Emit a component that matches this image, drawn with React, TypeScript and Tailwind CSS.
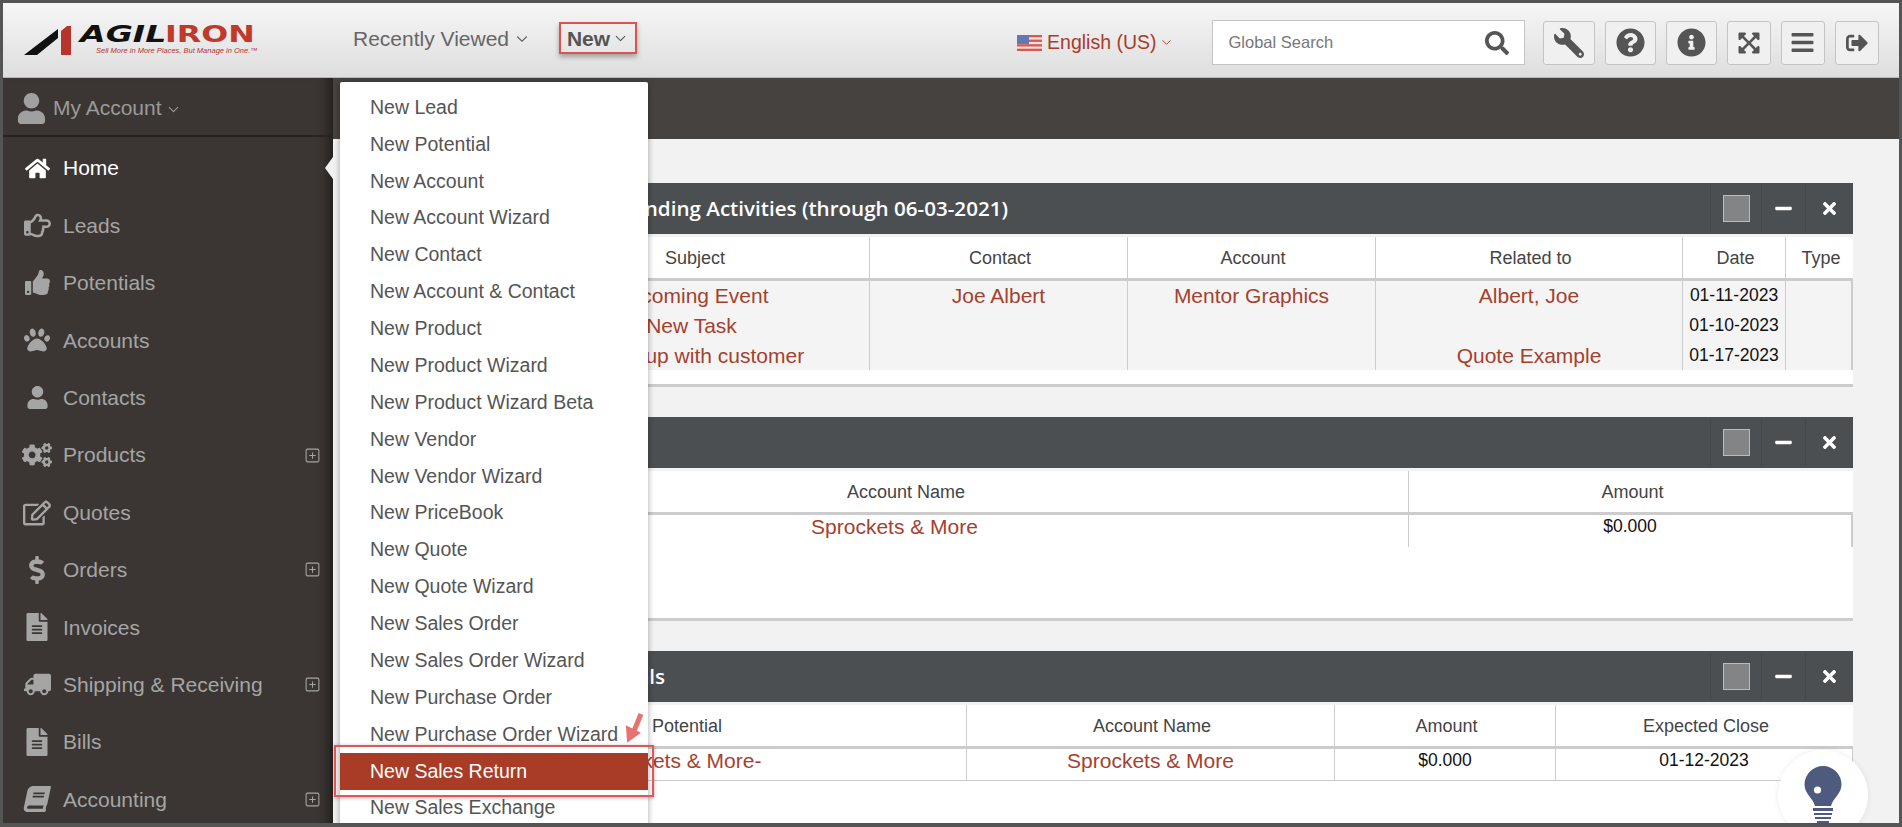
import type { ReactNode } from "react";
import { ChevronDown, SquarePlus } from "lucide-react";
import {
  FaBars,
  FaBook,
  FaCogs,
  FaDollarSign,
  FaExpandArrowsAlt,
  FaFileAlt,
  FaHome,
  FaInfoCircle,
  FaMinus,
  FaPaw,
  FaQuestionCircle,
  FaRegEdit,
  FaRegHandPointRight,
  FaSearch,
  FaSignOutAlt,
  FaThumbsUp,
  FaTimes,
  FaTruck,
  FaUser,
  FaWrench,
} from "react-icons/fa";

const navItems = [
  { label: "Home", icon: <FaHome size={25} />, active: true },
  { label: "Leads", icon: <FaRegHandPointRight size={27} /> },
  { label: "Potentials", icon: <FaThumbsUp size={25} /> },
  { label: "Accounts", icon: <FaPaw size={26} /> },
  { label: "Contacts", icon: <FaUser size={23} /> },
  { label: "Products", icon: <FaCogs size={30} />, more: true },
  { label: "Quotes", icon: <FaRegEdit size={28} /> },
  { label: "Orders", icon: <FaDollarSign size={28} />, more: true },
  { label: "Invoices", icon: <FaFileAlt size={28} /> },
  { label: "Shipping & Receiving", icon: <FaTruck size={27} className="-scale-x-100" />, more: true },
  { label: "Bills", icon: <FaFileAlt size={28} /> },
  { label: "Accounting", icon: <FaBook size={26} className="-skew-x-12" />, more: true },
];

const newItems = [
  "New Lead",
  "New Potential",
  "New Account",
  "New Account Wizard",
  "New Contact",
  "New Account & Contact",
  "New Product",
  "New Product Wizard",
  "New Product Wizard Beta",
  "New Vendor",
  "New Vendor Wizard",
  "New PriceBook",
  "New Quote",
  "New Quote Wizard",
  "New Sales Order",
  "New Sales Order Wizard",
  "New Purchase Order",
  "New Purchase Order Wizard",
  "New Sales Return",
  "New Sales Exchange",
];

function Logo() {
  return (
    <div className="flex items-start ml-[21px] w-[234px]">
      <svg width="54" height="30" viewBox="0 0 54 30" className="shrink-0 mt-[1px]">
        <polygon points="0,29 34,3 34,12 13,29" fill="#111" />
        <polygon points="37,5 43,0 47,0 47,29 37,29" fill="#b5352c" />
      </svg>
      <div className="ml-[2px] leading-none">
        <div className="flex text-[23px] h-[19px] leading-[19px] font-bold font-['DejaVu_Sans',sans-serif] whitespace-nowrap">
          <span className="italic text-[#111] w-[85px] origin-left scale-x-[1.44]">AGIL</span>
          <span className="text-[#c0392b] origin-left scale-x-[1.38]">IRON</span>
        </div>
        <div className="text-[7.5px] mt-[3px] ml-[16px] italic text-[#b5352c] whitespace-nowrap">
          Sell More in More Places, But Manage in One.™
        </div>
      </div>
    </div>
  );
}

function Flag() {
  return (
    <svg width="25" height="16" viewBox="0 0 25 16" className="shrink-0">
      <rect width="25" height="16" fill="#f1dfdc" />
      <rect y="0" width="25" height="2.3" fill="#d25a52" />
      <rect y="4.6" width="25" height="2.3" fill="#d25a52" />
      <rect y="9.2" width="25" height="2.3" fill="#d25a52" />
      <rect y="13.7" width="25" height="2.3" fill="#d25a52" />
      <rect width="12" height="9" fill="#6478b8" />
    </svg>
  );
}

function ToolButton({ icon, width }: { icon: ReactNode; width: string }) {
  return (
    <button className={`${width} h-[44px] flex items-center justify-center rounded-[3px] border border-[#c4c4c4] bg-[#f0f0f0] text-[#555]`}>
      {icon}
    </button>
  );
}

function Header() {
  return (
    <header className="h-[75px] shrink-0 flex items-center border-b border-[#b8b8b8] bg-gradient-to-b from-[#f6f6f6] to-[#dedede]">
      <Logo />
      <div className="ml-[95px] flex items-center text-[21px] text-[#666] mt-[-2px]">
        Recently Viewed
        <ChevronDown size={18} strokeWidth={1.5} className="ml-[4px]" />
      </div>
      <div className="ml-[28px] w-[78px] h-[32px] flex items-center justify-center pt-[1px] border-2 border-[#d9534f] shadow-[0_3px_5px_rgba(0,0,0,0.3)] text-[21px] font-bold text-[#555] mt-[-4px]">
        New
        <ChevronDown size={17} strokeWidth={1.5} className="ml-[2px]" />
      </div>
      <div className="ml-[380px] flex items-center text-[19.5px] text-[#a83c2a] mt-[5px]">
        <Flag />
        <span className="ml-[5px]">English (US)</span>
        <ChevronDown size={15} strokeWidth={1.5} className="ml-[2px]" />
      </div>
      <div className="ml-[38px] w-[313px] h-[45px] flex items-center justify-between pl-[16px] pr-[15px] bg-white border border-[#c4c4c4] mt-[5px] text-[16.5px] text-[#777]">
        Global Search
        <FaSearch size={24} className="text-[#555]" />
      </div>
      <div className="ml-[18px] flex items-center gap-[10px] mt-[5px]">
        <ToolButton width="w-[52px]" icon={<FaWrench size={30} className="-scale-x-100" />} />
        <ToolButton width="w-[51px]" icon={<FaQuestionCircle size={29} />} />
        <ToolButton width="w-[51px]" icon={<FaInfoCircle size={29} />} />
        <ToolButton width="w-[44px]" icon={<FaExpandArrowsAlt size={24} />} />
        <ToolButton width="w-[44px]" icon={<FaBars size={25} />} />
        <ToolButton width="w-[44px]" icon={<FaSignOutAlt size={22} />} />
      </div>
    </header>
  );
}

function Sidebar() {
  return (
    <aside className="w-[330px] shrink-0 flex flex-col bg-[#3b3633] shadow-[inset_-14px_0_12px_-10px_rgba(0,0,0,0.5)]">
      <div className="h-[59px] shrink-0 flex items-center pl-[13px] pt-[3px] border-b-2 border-[#262321] text-[21px] text-[#9a9a9a]">
        <FaUser size={31} className="text-[#a0a0a0]" />
        <span className="ml-[6px]">My Account</span>
        <ChevronDown size={17} strokeWidth={1.5} className="ml-[3px] mt-[2px]" />
      </div>
      <nav className="pt-[2.5px]">
        {navItems.map((item) => (
          <div
            key={item.label}
            className={`relative h-[57.4px] flex items-center ${item.active ? "text-white" : "text-[#a5a5a5]"}`}
          >
            <span className="w-[60px] flex justify-center pl-[8px] shrink-0">{item.icon}</span>
            <span className="text-[21px] whitespace-nowrap">{item.label}</span>
            {item.more && <SquarePlus size={17} strokeWidth={1.5} className="absolute left-[301px]" />}
            {item.active && (
              <span className="absolute right-0 w-0 h-0 border-y-[11px] border-y-transparent border-r-[8px] border-r-[#f2f2f2]" />
            )}
          </div>
        ))}
      </nav>
    </aside>
  );
}

function Panel({ title, titleWidth, children }: { title?: string; titleWidth?: string; children: ReactNode }) {
  return (
    <section className="h-[204px] shrink-0">
      <div className="h-[51px] flex items-center justify-between bg-[#4c4f52] text-white">
        <h2 className={`${titleWidth} text-right whitespace-nowrap text-[20.6px] font-semibold font-['Open_Sans',sans-serif]`}>{title}</h2>
        <div className="flex h-[47px] items-center text-white">
          <div className="w-[52px] h-full flex items-center justify-center border-x border-[#45484b]">
            <span className="block w-[27px] h-[27px] bg-[#838486] border border-[#bbb]" />
          </div>
          <div className="w-[44px] h-full flex items-center justify-center border-r border-[#45484b]">
            <FaMinus size={19} />
          </div>
          <div className="w-[47px] h-full flex items-center justify-center">
            <FaTimes size={19} />
          </div>
        </div>
      </div>
      <div className="mt-[3px] h-[150px] bg-white border-b-[3px] border-[#ccc]">{children}</div>
    </section>
  );
}

function HeadCell({ children }: { children?: ReactNode }) {
  return (
    <div className="h-[44px] flex items-center justify-center pt-[2px] pl-[3px] border-r border-b-[3px] border-[#ccc] last:border-r-0 text-[18px] text-[#444]">
      {children}
    </div>
  );
}

function BodyCell({ children, className = "" }: { children?: ReactNode; className?: string }) {
  return (
    <div className={`border-r border-[#ccc] text-center text-[21px] text-[#a5412f] whitespace-nowrap overflow-hidden ${className}`}>
      {children}
    </div>
  );
}

function DateLine({ children }: { children: ReactNode }) {
  return <div className="h-[30px] text-[17.5px] leading-[29px] text-[#111]">{children}</div>;
}

function SmallDate({ children }: { children: ReactNode }) {
  return <div className="text-[17.5px] leading-[23px] text-[#111]">{children}</div>;
}

function Main() {
  return (
    <div className="flex-1 min-w-0 flex flex-col">
      <div className="h-[61px] shrink-0 bg-[#45423f]" />
      <main className="flex-1 min-h-0 flex flex-col gap-[30px] pt-[44px] pl-[29px] pr-[46px] bg-[#f2f2f2]">
        <Panel title="Pending Activities (through 06-03-2021)" titleWidth="w-[646px]">
          <div className="grid grid-cols-[156px_352px_258px_248px_307px_103px_67px]">
            <HeadCell />
            <HeadCell>Subject</HeadCell>
            <HeadCell>Contact</HeadCell>
            <HeadCell>Account</HeadCell>
            <HeadCell>Related to</HeadCell>
            <HeadCell>Date</HeadCell>
            <HeadCell>Type</HeadCell>
          </div>
          <div className="grid grid-cols-[156px_352px_258px_248px_307px_103px_67px] h-[89px] bg-[#f4f4f4] leading-[30px]">
            <BodyCell />
            <BodyCell className="pr-[4px]">
              <div>Upcoming Event</div>
              <div>New Task</div>
              <div>Follow up with customer</div>
            </BodyCell>
            <BodyCell>Joe Albert</BodyCell>
            <BodyCell>Mentor Graphics</BodyCell>
            <BodyCell>
              <div>Albert, Joe</div>
              <div>&nbsp;</div>
              <div>Quote Example</div>
            </BodyCell>
            <BodyCell>
              <DateLine>01-11-2023</DateLine>
              <DateLine>01-10-2023</DateLine>
              <DateLine>01-17-2023</DateLine>
            </BodyCell>
            <BodyCell className="border-r-2" />
          </div>
        </Panel>
        <Panel>
          <div className="grid grid-cols-[39px_1008px_444px]">
            <HeadCell />
            <HeadCell>Account Name</HeadCell>
            <HeadCell>Amount</HeadCell>
          </div>
          <div className="grid grid-cols-[39px_1008px_444px] h-[32px] leading-[24px]">
            <BodyCell className="border-r-0" />
            <BodyCell className="pr-[20px]">Sprockets &amp; More</BodyCell>
            <BodyCell className="border-r-2">
              <SmallDate>$0.000</SmallDate>
            </BodyCell>
          </div>
        </Panel>
        <Panel title="Top Potentials" titleWidth="w-[303px]">
          <div className="grid grid-cols-[43px_562px_368px_221px_297px]">
            <HeadCell />
            <HeadCell>Potential</HeadCell>
            <HeadCell>Account Name</HeadCell>
            <HeadCell>Amount</HeadCell>
            <HeadCell>Expected Close</HeadCell>
          </div>
          <div className="grid grid-cols-[43px_562px_368px_221px_297px] h-[32px] border-b border-[#ccc] leading-[24px]">
            <BodyCell className="border-r-0" />
            <BodyCell className="pr-[22px]">Sprockets &amp; More-</BodyCell>
            <BodyCell>Sprockets &amp; More</BodyCell>
            <BodyCell>
              <SmallDate>$0.000</SmallDate>
            </BodyCell>
            <BodyCell>
              <SmallDate>01-12-2023</SmallDate>
            </BodyCell>
          </div>
        </Panel>
      </main>
    </div>
  );
}

function NewMenu() {
  return (
    <div className="absolute left-[337px] top-[79px] w-[308px] pt-[7px] pb-[6px] bg-white rounded-[2px] shadow-[0_1px_6px_rgba(0,0,0,0.35)]">
      {newItems.map((item) =>
        item === "New Sales Return" ? (
          <div key={item} className="relative h-[36.88px] flex items-center pl-[30px] bg-[#a93c27] text-[19.5px] text-white">
            {item}
            <span className="absolute -left-[6px] -right-[6px] -top-[8px] -bottom-[7px] border-2 border-[#e0575a] shadow-[0_1px_4px_rgba(0,0,0,0.3)]" />
            <svg width="22" height="32" viewBox="0 0 22 32" className="absolute left-[283px] -top-[40px]">
              <path d="M18 1 L11 18" stroke="#e8726f" strokeWidth="5" />
              <path d="M4 14 L5 28 L16 20 Z" stroke="#e8726f" strokeWidth="2" fill="#e8726f" />
            </svg>
          </div>
        ) : (
          <div key={item} className="h-[36.88px] flex items-center pl-[30px] text-[19.5px] text-[#555] whitespace-nowrap">
            {item}
          </div>
        )
      )}
    </div>
  );
}

function HelpBulb() {
  return (
    <div className="absolute left-[1775px] top-[747px] w-[90px] h-[90px] rounded-full bg-white shadow-[0_0_6px_rgba(0,0,0,0.08)] flex justify-center">
      <svg width="40" height="58" viewBox="0 0 40 58" className="mt-[16px]">
        <path d="M20 0 A18.5 18.5 0 0 1 38.5 18.5 C38.5 28 30 32 28 40 H12 C10 32 1.5 28 1.5 18.5 A18.5 18.5 0 0 1 20 0 Z" fill="#4e5a7e" />
        <circle cx="14.5" cy="24" r="3.6" fill="#fff" />
        <rect x="10" y="42" width="20" height="3" fill="#4e5a7e" />
        <rect x="11" y="47" width="18" height="2" fill="#4e5a7e" />
        <rect x="12" y="51" width="16" height="2" fill="#4e5a7e" />
        <rect x="14" y="55" width="12" height="2" fill="#4e5a7e" />
      </svg>
    </div>
  );
}

export default function App() {
  return (
    <div className="relative w-[1902px] h-[827px] box-border overflow-hidden flex flex-col border-t-[3px] border-l-[3px] border-r-[3px] border-b-[4px] border-[#555] font-['Liberation_Sans',Arial,sans-serif]">
      <Header />
      <div className="flex-1 min-h-0 flex overflow-hidden">
        <Sidebar />
        <Main />
      </div>
      <NewMenu />
      <HelpBulb />
    </div>
  );
}
